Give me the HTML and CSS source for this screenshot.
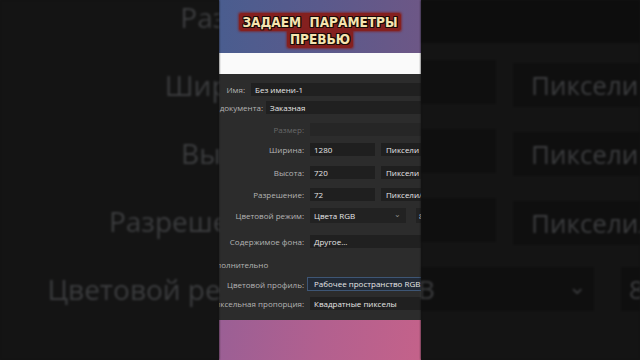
FILE: index.html
```html
<!DOCTYPE html>
<html lang="ru">
<head>
<meta charset="utf-8">
<title>Задаем параметры превью</title>
<link rel="stylesheet" href="styles.css">
</head>
<body>
<div class="page">
  <div class="side side-left" aria-hidden="true">
    <div class="ghost-labels">
      <div class="ghost-label">Размер:</div>
      <div class="ghost-label">Ширина:</div>
      <div class="ghost-label">Высота:</div>
      <div class="ghost-label">Разрешение:</div>
      <div class="ghost-label">Цветовой режим:</div>
    </div>
  </div>

  <main class="strip">
    <header class="hero">
      <h1 class="title"><span class="title-mark">ЗАДАЕМ&nbsp; ПАРАМЕТРЫ<br>ПРЕВЬЮ</span></h1>
    </header>
    <div class="white-band"></div>

    <section class="dialog">
      <div class="row row-name">
        <span class="lbl">Имя:</span>
        <span class="field">Без имени-1</span>
      </div>
      <div class="row row-type">
        <span class="lbl">Тип документа:</span>
        <span class="field">Заказная</span>
      </div>
      <div class="row row-size">
        <span class="lbl lbl-off">Размер:</span>
        <span class="field field-off"></span>
      </div>
      <div class="row row-w">
        <span class="lbl">Ширина:</span>
        <span class="field field-num">1280</span>
        <span class="field field-unit">Пиксели</span>
      </div>
      <div class="row row-h">
        <span class="lbl">Высота:</span>
        <span class="field field-num">720</span>
        <span class="field field-unit">Пиксели</span>
      </div>
      <div class="row row-res">
        <span class="lbl">Разрешение:</span>
        <span class="field field-num">72</span>
        <span class="field field-unit">Пиксели/дюйм</span>
      </div>
      <div class="row row-mode">
        <span class="lbl">Цветовой режим:</span>
        <span class="field field-select">Цвета RGB<span class="chev">⌄</span></span>
        <span class="field field-bits">8 бит</span>
      </div>
      <div class="row row-bg">
        <span class="lbl">Содержимое фона:</span>
        <span class="field">Другое...</span>
      </div>
      <div class="section-title">Дополнительно</div>
      <div class="row row-profile">
        <span class="lbl">Цветовой профиль:</span>
        <span class="field field-focus">Рабочее пространство RGB: sRGB IEC61966-2.1</span>
      </div>
      <div class="row row-aspect">
        <span class="lbl">Попиксельная пропорция:</span>
        <span class="field">Квадратные пикселы</span>
      </div>
    </section>

    <footer class="pink-band"></footer>
  </main>

  <div class="side side-right" aria-hidden="true">
    <div class="ghost-band"></div>
    <div class="ghost-row ghost-row-w">
      <span class="ghost-box ghost-num"></span>
      <span class="ghost-box ghost-unit">Пиксели</span>
    </div>
    <div class="ghost-row">
      <span class="ghost-box ghost-num"></span>
      <span class="ghost-box ghost-unit">Пиксели</span>
    </div>
    <div class="ghost-row">
      <span class="ghost-box ghost-num"></span>
      <span class="ghost-box ghost-unit">Пиксели/дюйм</span>
    </div>
    <div class="ghost-row">
      <span class="ghost-box ghost-select">B<span class="ghost-chev">⌄</span></span>
      <span class="ghost-box ghost-bits">8 бит</span>
    </div>
  </div>
</div>
</body>
</html>
```

FILE: styles.css
```css
* { box-sizing: border-box; }

html, body {
  margin: 0;
  padding: 0;
  background: #141414;
}

.page {
  width: 640px;
  height: 360px;
  display: grid;
  grid-template-columns: 219px 202px 219px;
  overflow: hidden;
  font-family: "Open Sans", "Noto Sans", sans-serif;
}

/* ---------- blurred side backgrounds ---------- */
.side {
  height: 360px;
  overflow: hidden;
  background: #141414;
  color: #3b3c3e;
  font-size: 28px;
  white-space: nowrap;
  filter: blur(1.2px);
}

.ghost-labels {
  width: 287px;
  margin-top: -17px;
  display: flex;
  flex-direction: column;
}

.ghost-label {
  height: 68px;
  line-height: 68px;
  text-align: right;
}

.side-right {
  display: flex;
  flex-direction: column;
  font-size: 26px;
}

.ghost-band {
  height: 43px;
  flex: none;
  background: #0d0d0d;
}

.ghost-row {
  display: flex;
  gap: 17px;
  height: 46px;
  margin-top: 23px;
  flex: none;
}

.ghost-row-w { margin-top: 17px; }

.ghost-box {
  background: #0f0f0f;
  height: 44px;
  line-height: 44px;
  flex: none;
}

.ghost-num { width: 75px; }

.ghost-unit {
  width: 200px;
  margin-top: 3px;
  padding-left: 18px;
}

.ghost-select {
  width: 185px;
  display: flex;
  justify-content: space-between;
  padding-left: 9px;
  padding-right: 8px;
  margin-left: -12px;
}

.ghost-chev {
  font-size: 22px;
  line-height: 36px;
}

.ghost-bits {
  width: 80px;
  margin-left: 10px;
  padding-left: 8px;
}

/* ---------- centre strip ---------- */
.strip {
  height: 360px;
  display: flex;
  flex-direction: column;
  overflow: hidden;
}

.hero {
  height: 53px;
  flex: none;
  background: linear-gradient(90deg, #4a5d8f 0%, #5a5a8c 50%, #6d5786 100%);
  padding-top: 14px;
  text-align: center;
}

.title {
  margin: 0;
  font-family: "DejaVu Sans Condensed", "DejaVu Sans", sans-serif;
  font-weight: bold;
  font-size: 13.5px;
  line-height: 17px;
  color: #f6e4b0;
}

.title-mark {
  background: #84201f;
  padding: 1px 3px;
  border-radius: 2px;
  -webkit-box-decoration-break: clone;
  box-decoration-break: clone;
  box-shadow: 0 0 2px 1px rgba(132, 32, 31, 0.7);
  text-shadow:
    1px 0 0 #1a0a08, -1px 0 0 #1a0a08, 0 1px 0 #1a0a08, 0 -1px 0 #1a0a08,
    1px 1px 0 #1a0a08, -1px -1px 0 #1a0a08, 1px -1px 0 #1a0a08, -1px 1px 0 #1a0a08;
}

.white-band {
  height: 21px;
  flex: none;
  background: #fafafa;
}

.dialog {
  height: 246px;
  flex: none;
  background: #2c2c2c;
  padding-top: 9px;
  display: flex;
  flex-direction: column;
  overflow: hidden;
  font-size: 8px;
  white-space: nowrap;
}

.row {
  display: flex;
  align-items: center;
  height: 13px;
  flex: none;
}

.lbl {
  flex: none;
  width: 85px;
  margin-right: 6px;
  color: #b4b4b4;
  display: flex;
  justify-content: flex-end;
}

.lbl-off { color: #686868; }

.field {
  flex: none;
  height: 13px;
  line-height: 13px;
  background: #202020;
  color: #e6e6e6;
  padding-left: 4px;
  width: 220px;
}

.field-off { background: #262626; }

.row-name .lbl { width: 26px; }
.row-type { margin-top: 5px; }
.row-type .lbl { width: 44px; margin-right: 3px; }
.row-size { margin-top: 9px; }
.row-w { margin-top: 7px; }
.row-h { margin-top: 10px; }
.row-res { margin-top: 9px; }
.row-mode { margin-top: 7px; height: 15px; }
.row-bg { margin-top: 12px; }

.field-num { width: 65px; background: #1f1f1f; }

.field-unit {
  width: 60px;
  margin-left: 6px;
  background: #1f1f1f;
  padding-left: 5px;
}

.field-select {
  height: 15px;
  line-height: 15px;
  width: 96px;
  display: flex;
  justify-content: space-between;
  padding-right: 5px;
  background: #222222;
}

.chev {
  color: #8a8a8a;
  font-size: 8px;
  line-height: 11px;
}

.field-bits {
  height: 15px;
  line-height: 15px;
  margin-left: 10px;
  width: 40px;
  padding-left: 3px;
  background: #222222;
}

.section-title {
  flex: none;
  height: 12px;
  line-height: 12px;
  margin-top: 11px;
  margin-left: -13px;
  color: #b4b4b4;
}

.row-profile { margin-top: 6px; height: 14px; }
.row-profile .lbl { margin-right: 3px; }

.field-focus {
  height: 14px;
  line-height: 12px;
  background: #222a36;
  border: 1px solid #3e5675;
  padding-left: 6px;
}

.row-aspect { margin-top: 6px; }

.pink-band {
  flex: 1;
  background: linear-gradient(100deg, #9a5f95 0%, #b2608f 50%, #c4628a 100%);
}
```
